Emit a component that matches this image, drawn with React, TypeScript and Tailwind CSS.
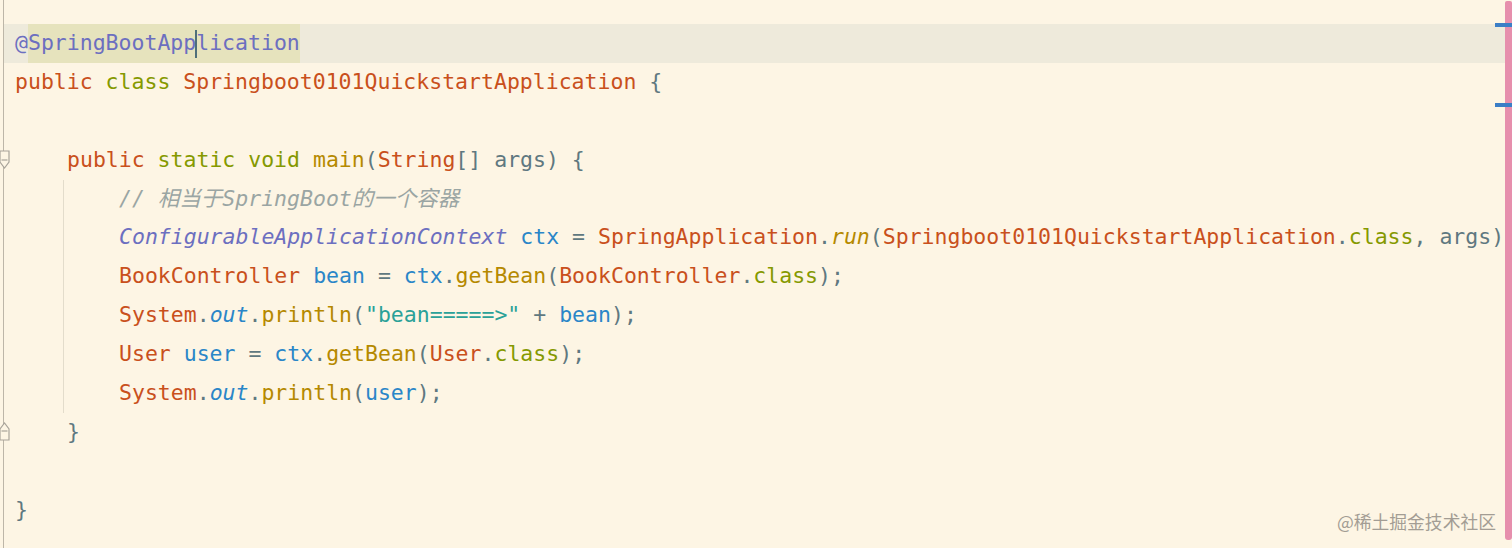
import React from "react";

type Tok = [string, string];

const mono = "font-['DejaVu_Sans_Mono','Noto_Sans_CJK_SC',monospace]";

// token colours (solarized light-ish)
const ty = "text-[#c9501c]";
const gr = "text-[#859900]";
const fn = "text-[#b58900]";
const pl = "text-[#5f7880]";
const va = "text-[#2a86c8]";
const an = "text-[#6c6fc0]";
const st = "text-[#2aa198]";
const cm = "text-[#9aa5a3] italic";

const body: Tok[][] = [
  [["// 相当于SpringBoot的一个容器", cm]],
  [
    ["ConfigurableApplicationContext ", an + " italic"],
    ["ctx ", va],
    ["= ", pl],
    ["SpringApplication", ty],
    [".", pl],
    ["run", fn + " italic"],
    ["(", pl],
    ["Springboot0101QuickstartApplication", ty],
    [".", pl],
    ["class", gr],
    [", args);", pl],
  ],
  [
    ["BookController ", ty],
    ["bean ", va],
    ["= ", pl],
    ["ctx", va],
    [".", pl],
    ["getBean", fn],
    ["(", pl],
    ["BookController", ty],
    [".", pl],
    ["class", gr],
    [");", pl],
  ],
  [
    ["System", ty],
    [".", pl],
    ["out", va + " italic"],
    [".", pl],
    ["println", fn],
    ["(", pl],
    ['"bean=====>"', st],
    [" + ", pl],
    ["bean", va],
    [");", pl],
  ],
  [
    ["User ", ty],
    ["user ", va],
    ["= ", pl],
    ["ctx", va],
    [".", pl],
    ["getBean", fn],
    ["(", pl],
    ["User", ty],
    [".", pl],
    ["class", gr],
    [");", pl],
  ],
  [
    ["System", ty],
    [".", pl],
    ["out", va + " italic"],
    [".", pl],
    ["println", fn],
    ["(", pl],
    ["user", va],
    [");", pl],
  ],
];

const Line = ({ toks, className = "" }: { toks: Tok[]; className?: string }) => (
  <div className={`h-[38.9px] ${className}`}>
    {toks.map(([t, c], j) => (
      <span key={j} className={c}>
        {t}
      </span>
    ))}
  </div>
);

const FoldMarker = ({ up }: { up?: boolean }) => (
  <svg width="12" height="20" viewBox="0 0 12 20" className="block">
    {up ? (
      <path d="M1 19 V8 L5.5 2 L10 8 V19 Z" fill="#fdf5e4" stroke="#a9a49a" strokeWidth="1.2" />
    ) : (
      <path d="M1 1 V12 L5.5 18 L10 12 V1 Z" fill="#fdf5e4" stroke="#a9a49a" strokeWidth="1.2" />
    )}
    <line x1="2.5" y1="10" x2="8.5" y2="10" stroke="#a9a49a" strokeWidth="1.2" />
  </svg>
);

export default function App() {
  return (
    <div className="relative flex h-[548px] w-[1512px] overflow-hidden bg-[#fdf5e4]">
      {/* gutter with fold markers */}
      <div className="relative w-[4px] shrink-0 border-r border-[#bdb6a8]">
        <div className="absolute left-[-1px] top-[150px]">
          <FoldMarker />
        </div>
        <div className="absolute left-[-1px] top-[421px]">
          <FoldMarker up />
        </div>
      </div>

      {/* editor text */}
      <div
        className={`min-w-0 flex-1 overflow-hidden pt-[24px] ${mono} text-[21.5px] leading-[38.9px] whitespace-pre`}
      >
        <div className="flex h-[38.9px] bg-[#eeeadb] pl-[11px]">
          <span className={an}>@</span>
          <span className={`flex bg-[#e6e3bd] ${an}`}>
            SpringBootApp
            <span className="mx-[-1px] mt-[6px] h-[28px] w-[2px] bg-[#4f6f7a]" />
            lication
          </span>
        </div>
        <Line
          className="pl-[11px]"
          toks={[
            ["public ", ty],
            ["class ", gr],
            ["Springboot0101QuickstartApplication ", ty],
            ["{", pl],
          ]}
        />
        <Line toks={[]} />
        <Line
          className="pl-[63px]"
          toks={[
            ["public ", ty],
            ["static ", gr],
            ["void ", gr],
            ["main", fn],
            ["(", pl],
            ["String", ty],
            ["[] args) {", pl],
          ]}
        />
        {/* method body with indent guide */}
        <div className="ml-[59px] flex flex-col border-l border-[#e3dccb] pl-[55px]">
          {body.map((toks, i) => (
            <Line key={i} toks={toks} />
          ))}
        </div>
        <Line className="pl-[63px]" toks={[["}", pl]]} />
        <Line toks={[]} />
        <Line className="pl-[11px]" toks={[["}", pl]]} />
      </div>

      {/* scrollbar / error stripe */}
      <div className="relative w-[7px] shrink-0 pb-[8px] pt-[1px]">
        <div className="h-full w-full rounded-b-[3px] rounded-t-[2px] bg-[#e68fad]" />
        <div className="absolute right-0 top-[23px] h-[4px] w-[17px] bg-[#3b7ec6]" />
        <div className="absolute right-0 top-[103px] h-[4px] w-[17px] bg-[#3b7ec6]" />
      </div>

      {/* watermark */}
      <div className="absolute bottom-[16px] right-[16px] font-['Noto_Sans_CJK_SC',sans-serif] text-[17.8px] leading-[22px] text-[#a39d94]">
        @稀土掘金技术社区
      </div>
    </div>
  );
}
